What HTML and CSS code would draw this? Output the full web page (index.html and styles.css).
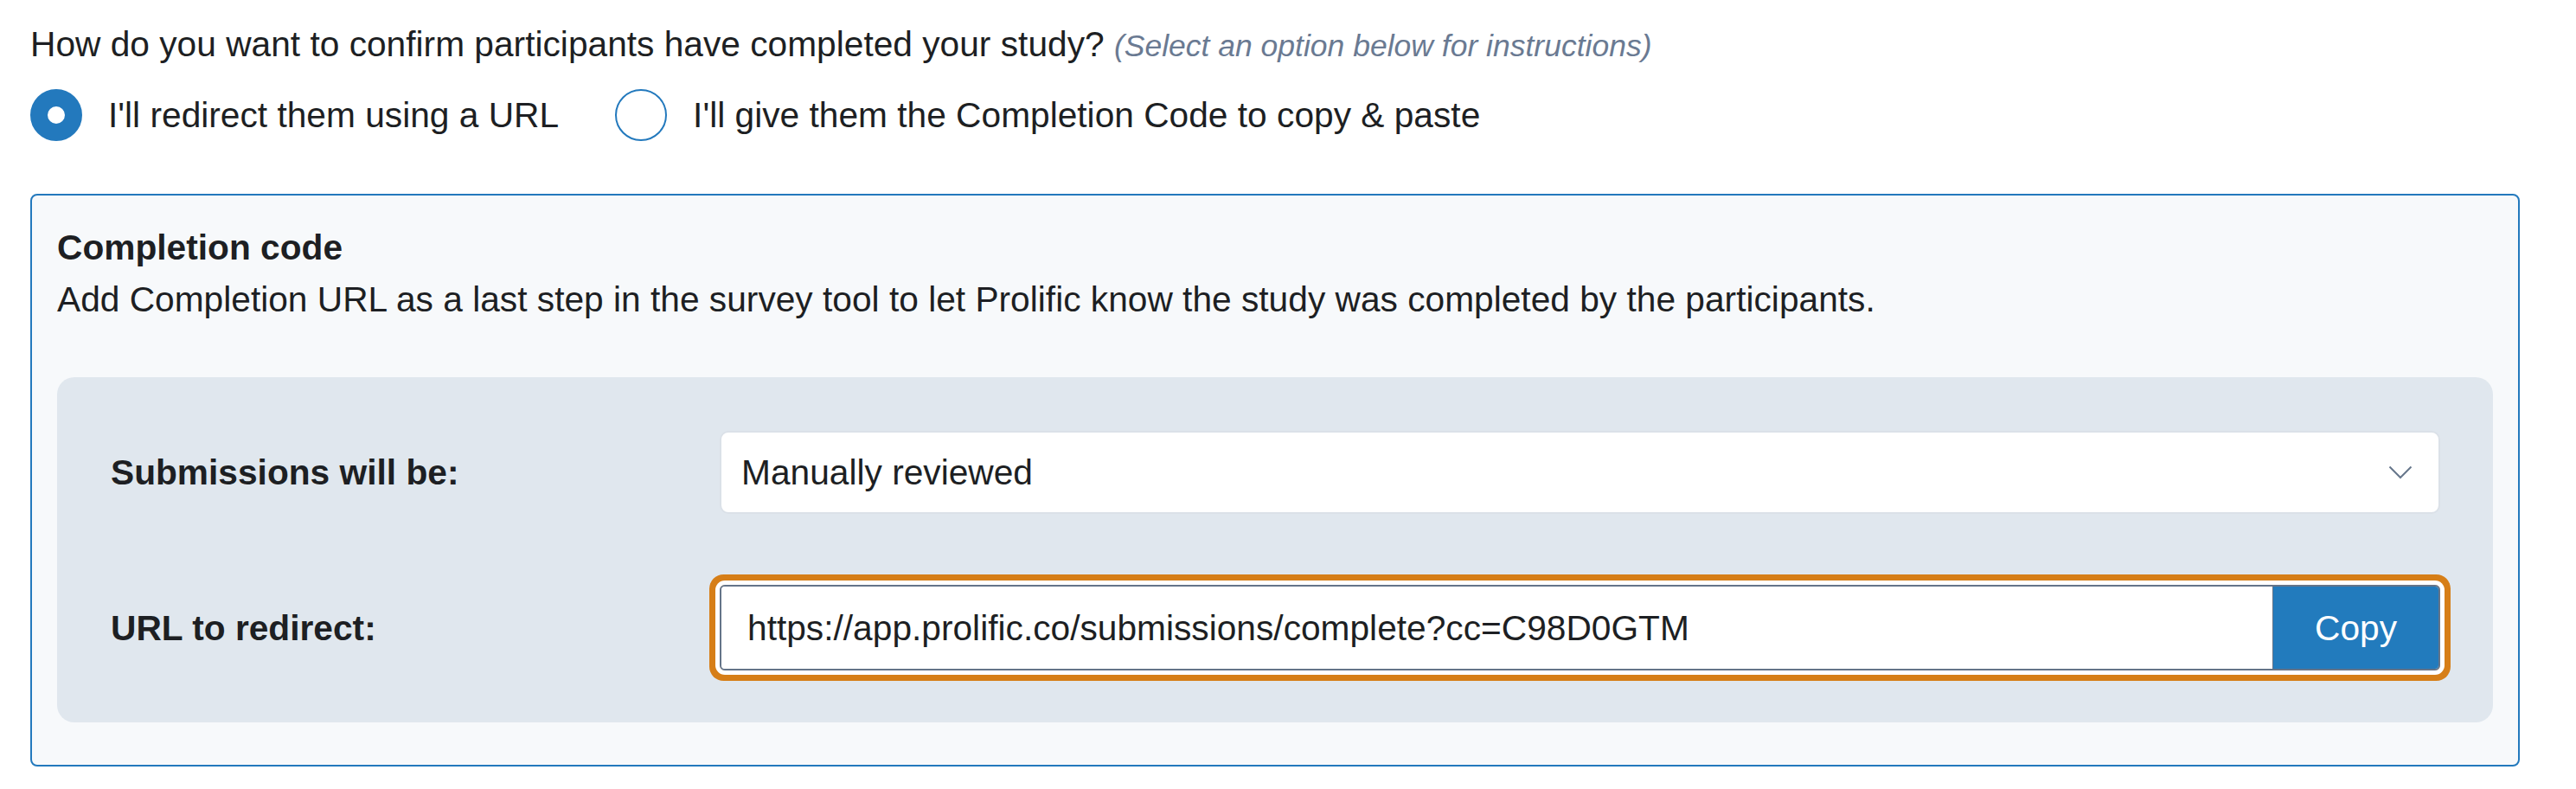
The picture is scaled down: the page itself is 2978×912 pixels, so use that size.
FILE: index.html
```html
<!DOCTYPE html>
<html lang="en">
<head>
<meta charset="utf-8">
<title>Completion settings</title>
<link rel="stylesheet" href="styles.css">
</head>
<body>
<div class="page">
  <p class="question">How do you want to confirm participants have completed your study? <span class="hint">(Select an option below for instructions)</span></p>
  <div class="options">
    <label class="option"><span class="radio checked"></span><span>I'll redirect them using a URL</span></label>
    <label class="option"><span class="radio"></span><span>I'll give them the Completion Code to copy &amp; paste</span></label>
  </div>
  <section class="panel">
    <h3 class="panel-title">Completion code</h3>
    <p class="panel-desc">Add Completion URL as a last step in the survey tool to let Prolific know the study was completed by the participants.</p>
    <div class="settings">
      <div class="row">
        <div class="row-label">Submissions will be:</div>
        <div class="select">
          <span>Manually reviewed</span>
          <svg class="chevron" width="28" height="16" viewBox="0 0 28 16"><path d="M1.5 1.5 L14 14 L26.5 1.5" fill="none" stroke="#66768b" stroke-width="2"/></svg>
        </div>
      </div>
      <div class="row">
        <div class="row-label">URL to redirect:</div>
        <div class="url-group">
          <div class="url-input">https://app.prolific.co/submissions/complete?cc=C98D0GTM</div>
          <button class="copy-btn" type="button">Copy</button>
        </div>
      </div>
    </div>
  </section>
</div>
</body>
</html>
```
FILE: styles.css
```css
html, body {
  margin: 0;
  padding: 0;
  background: #ffffff;
}

body {
  font-family: "Liberation Sans", Arial, Helvetica, sans-serif;
  color: #1d1f23;
  font-size: 40.7px;
  line-height: 56px;
}

.page {
  padding: 23px 65px 0 35px;
}

.question {
  margin: 0;
}

.hint {
  font-style: italic;
  font-size: 35.5px;
  color: #6a7a92;
}

.options {
  display: flex;
  align-items: center;
  margin-top: 22px;
}

.option {
  display: flex;
  align-items: center;
  gap: 30px;
  margin-right: 65px;
}

.radio {
  width: 60px;
  height: 60px;
  box-sizing: border-box;
  border-radius: 50%;
  border: 2px solid #2379bd;
  background: #ffffff;
  flex: none;
}

.radio.checked {
  border-width: 20px;
}

.panel {
  margin-top: 61px;
  border: 2px solid #2379bd;
  border-radius: 8px;
  background: #f7f9fb;
  padding: 32px 29px 49px 29px;
}

.panel-title {
  margin: 0;
  font-size: 40.7px;
  font-weight: 700;
  line-height: 56px;
}

.panel-desc {
  margin: 4px 0 0 0;
}

.settings {
  margin-top: 62px;
  background: #e0e7ee;
  border-radius: 20px;
  padding: 62px 61px 60px 62px;
}

.row {
  display: grid;
  grid-template-columns: 704px 1fr;
  align-items: center;
}

.row + .row {
  margin-top: 82px;
}

.row-label {
  font-weight: 700;
}

.select {
  height: 96px;
  box-sizing: border-box;
  border: 2px solid #dbe1e8;
  border-radius: 10px;
  background: #ffffff;
  display: flex;
  align-items: center;
  justify-content: space-between;
  padding: 0 30px 0 23px;
}

.chevron {
  display: block;
}

.url-group {
  display: flex;
  height: 99px;
  box-sizing: border-box;
  border: 2px solid #647489;
  border-radius: 6px;
  overflow: hidden;
  box-shadow: 0 0 0 5px #ffffff, 0 0 0 12px #d67e17;
}

.url-input {
  flex: 1;
  display: flex;
  align-items: center;
  padding-left: 30px;
  background: #ffffff;
}

.copy-btn {
  flex: none;
  background: #227bbd;
  color: #ffffff;
  border: none;
  border-left: 1px solid #647489;
  font: inherit;
  padding: 0 48px;
  margin: 0;
  cursor: pointer;
}
```
